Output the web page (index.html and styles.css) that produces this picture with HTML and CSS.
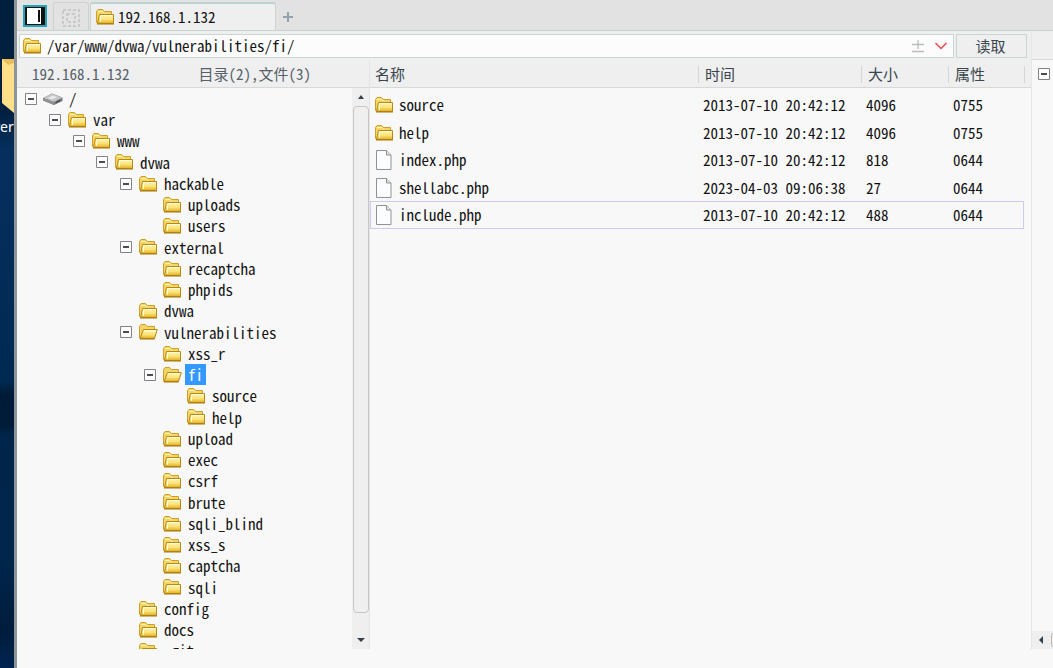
FILE: index.html
```html
<!DOCTYPE html>
<html lang="zh-CN">
<head>
<meta charset="utf-8">
<title>192.168.1.132</title>
<link rel="stylesheet" href="styles.css">
</head>
<body>
<svg class="sprite" aria-hidden="true">
  <defs>
    <linearGradient id="gold" x1="0" y1="0" x2="0" y2="1">
      <stop offset="0" stop-color="#fff6b8"/><stop offset="0.55" stop-color="#fbe277"/><stop offset="1" stop-color="#e0ae24"/>
    </linearGradient>
    <symbol id="folder" viewBox="0 0 20 18">
      <path d="M1.500 14.500V3.500L3 1.500H7.500L9.500 3.500H16.500V15Z" fill="#f3d566" stroke="#cf9f2b"/>
      <path d="M3 3.500H8L10 5.500" fill="none" stroke="#fff3b0"/>
      <path d="M4.500 6.500H18.500V15.500H2.500Z" fill="url(#gold)" stroke="#b98a12"/>
      <path d="M5.500 7.500H17.500M5.500 7.500V14" fill="none" stroke="#fffbd8"/>
      <path d="M2 16H19" stroke="#a87606"/>
    </symbol>
    <symbol id="folder-open" viewBox="0 0 20 18">
      <path d="M1.500 15V3.500L3 1.500H7.500L9.500 3.500H16.500V15Z" fill="#f3d566" stroke="#cf9f2b"/>
      <path d="M5.500 6.500H19.300L16.500 15.500H2Z" fill="url(#gold)" stroke="#b98a12"/>
      <path d="M6 7.800H18" stroke="#fffbd8"/>
      <path d="M2 16H16.500" stroke="#a87606"/>
    </symbol>
    <symbol id="file" viewBox="0 0 20 22">
      <path d="M2.500 1.500H12.500L17 6V20.500H2.500Z" fill="#fbfcfd" stroke="#8e9397"/>
      <path d="M12.500 1.500V6H17" fill="#dfe3e6" stroke="#8e9397"/>
    </symbol>
    <symbol id="drive" viewBox="0 0 20 18">
      <path d="M0 8L9 3.500L19.500 7.500V11L11 15L0 10.500Z" fill="#77797c"/>
      <path d="M0 8L9 3.500L19.500 7.500L11 12Z" fill="#c2c4c6"/>
      <path d="M5 8L10 5.500L14 7L9 9.500Z" fill="#e9eaeb"/>
      <path d="M0 10.500L11 15V12L0 8Z" fill="#8f9194"/>
      <path d="M13 13L17 11V10L13 12Z" fill="#33363a"/>
    </symbol>
    <symbol id="minus" viewBox="0 0 12 12">
      <path d="M.5.5H11.500V11.500H.5Z" fill="#fdfdfd" stroke="#808488"/>
      <path d="M3 6H9" stroke="#111" stroke-width="1.500"/>
    </symbol>
  </defs>
</svg>

<aside class="desktop">
  <svg class="desktop-icon" viewBox="0 0 14 54"><path d="M2 0H14V54L2 44Z" fill="#ffdf8a"/><path d="M2 0H14V4L8 6Z" fill="#e9bd58"/></svg>
  <span class="desktop-label">ver</span>
</aside>

<main class="window">
  <nav class="tabs">
    <button class="tab-panel" aria-label="面板">
      <svg viewBox="0 0 24 22"><path d="M1 1H23V21H1Z" fill="#111" stroke="#20a5b6" stroke-width="2"/><path d="M4 3H15V19H4Z" fill="#fff"/><path d="M15 3H18V19H15Z" fill="#fff"/><path d="M16 5V17" stroke="#111" stroke-width="2"/></svg>
    </button>
    <button class="tab tab-blank" aria-label="空白">
      <svg viewBox="0 0 18 18"><path d="M1 1H17V17H1ZM5 5H13V13H5Z" fill="none" stroke="#bfc1c2" stroke-width="1.500" stroke-dasharray="3 2"/></svg>
    </button>
    <button class="tab tab-active"><svg class="icon"><use href="#folder"/></svg>192.168.1.132</button>
    <button class="tab-add" aria-label="新建"><svg viewBox="0 0 12 12"><path d="M6 1V11M1 6H11" stroke="#93a4ae" stroke-width="2"/></svg></button>
  </nav>

  <div class="body">
    <div class="manager">
      <form class="toolbar">
        <label class="address">
          <svg class="icon"><use href="#folder"/></svg>
          <input type="text" value="/var/www/dvwa/vulnerabilities/fi/" aria-label="路径">
          <svg class="glyph" viewBox="0 0 14 14"><path d="M7 1V10M1 5.500H13M1 12.500H13" stroke="#b9bbbc" stroke-width="1.300" fill="none"/></svg>
          <svg class="glyph" viewBox="0 0 14 14"><path d="M1.500 4L7 9.500L12.500 4" stroke="#f0484a" stroke-width="1.500" fill="none"/></svg>
        </label>
        <button type="button" class="read">读取</button>
      </form>

      <div class="panes">
        <section class="tree-pane">
          <header class="tree-head"><span>192.168.1.132</span><span>目录(2),文件(3)</span></header>
          <div class="tree-body">
            <ul class="tree">
              <li class="l0"><button aria-label="收起"><svg><use href="#minus"/></svg></button><svg class="icon"><use href="#drive"/></svg><span>/</span></li>
              <li class="l1"><button aria-label="收起"><svg><use href="#minus"/></svg></button><svg class="icon"><use href="#folder"/></svg><span>var</span></li>
              <li class="l2"><button aria-label="收起"><svg><use href="#minus"/></svg></button><svg class="icon"><use href="#folder"/></svg><span>www</span></li>
              <li class="l3"><button aria-label="收起"><svg><use href="#minus"/></svg></button><svg class="icon"><use href="#folder"/></svg><span>dvwa</span></li>
              <li class="l4"><button aria-label="收起"><svg><use href="#minus"/></svg></button><svg class="icon"><use href="#folder"/></svg><span>hackable</span></li>
              <li class="l5 leaf"><svg class="icon"><use href="#folder"/></svg><span>uploads</span></li>
              <li class="l5 leaf"><svg class="icon"><use href="#folder"/></svg><span>users</span></li>
              <li class="l4"><button aria-label="收起"><svg><use href="#minus"/></svg></button><svg class="icon"><use href="#folder"/></svg><span>external</span></li>
              <li class="l5 leaf"><svg class="icon"><use href="#folder"/></svg><span>recaptcha</span></li>
              <li class="l5 leaf"><svg class="icon"><use href="#folder"/></svg><span>phpids</span></li>
              <li class="l4 leaf"><svg class="icon"><use href="#folder"/></svg><span>dvwa</span></li>
              <li class="l4"><button aria-label="收起"><svg><use href="#minus"/></svg></button><svg class="icon"><use href="#folder-open"/></svg><span>vulnerabilities</span></li>
              <li class="l5 leaf"><svg class="icon"><use href="#folder"/></svg><span>xss_r</span></li>
              <li class="l5"><button aria-label="收起"><svg><use href="#minus"/></svg></button><svg class="icon"><use href="#folder-open"/></svg><span class="selected">fi</span></li>
              <li class="l6 leaf"><svg class="icon"><use href="#folder"/></svg><span>source</span></li>
              <li class="l6 leaf"><svg class="icon"><use href="#folder"/></svg><span>help</span></li>
              <li class="l5 leaf"><svg class="icon"><use href="#folder"/></svg><span>upload</span></li>
              <li class="l5 leaf"><svg class="icon"><use href="#folder"/></svg><span>exec</span></li>
              <li class="l5 leaf"><svg class="icon"><use href="#folder"/></svg><span>csrf</span></li>
              <li class="l5 leaf"><svg class="icon"><use href="#folder"/></svg><span>brute</span></li>
              <li class="l5 leaf"><svg class="icon"><use href="#folder"/></svg><span>sqli_blind</span></li>
              <li class="l5 leaf"><svg class="icon"><use href="#folder"/></svg><span>xss_s</span></li>
              <li class="l5 leaf"><svg class="icon"><use href="#folder"/></svg><span>captcha</span></li>
              <li class="l5 leaf"><svg class="icon"><use href="#folder"/></svg><span>sqli</span></li>
              <li class="l4 leaf"><svg class="icon"><use href="#folder"/></svg><span>config</span></li>
              <li class="l4 leaf"><svg class="icon"><use href="#folder"/></svg><span>docs</span></li>
              <li class="l4 leaf"><svg class="icon"><use href="#folder"/></svg><span>.git</span></li>
            </ul>
            <div class="scrollbar">
              <svg class="arrow" viewBox="0 0 8 8"><path d="M1 6L4 2L7 6Z" fill="#35404a"/></svg>
              <div class="thumb"></div>
              <svg class="arrow" viewBox="0 0 8 8"><path d="M0 2H8L4 6Z" fill="#35404a"/></svg>
            </div>
          </div>
        </section>

        <section class="list-pane">
          <table class="files">
            <thead><tr><th class="name">名称</th><th class="time">时间</th><th class="size">大小</th><th class="attr">属性</th><th class="end"></th></tr></thead>
            <tbody>
              <tr><td><div class="entry"><svg class="icon"><use href="#folder"/></svg>source</div></td><td>2013-07-10 20:42:12</td><td>4096</td><td>0755</td></tr>
              <tr><td><div class="entry"><svg class="icon"><use href="#folder"/></svg>help</div></td><td>2013-07-10 20:42:12</td><td>4096</td><td>0755</td></tr>
              <tr><td><div class="entry"><svg class="icon doc"><use href="#file"/></svg>index.php</div></td><td>2013-07-10 20:42:12</td><td>818</td><td>0644</td></tr>
              <tr><td><div class="entry"><svg class="icon doc"><use href="#file"/></svg>shellabc.php</div></td><td>2023-04-03 09:06:38</td><td>27</td><td>0644</td></tr>
              <tr class="focused"><td><div class="entry"><svg class="icon doc"><use href="#file"/></svg>include.php</div></td><td>2013-07-10 20:42:12</td><td>488</td><td>0644</td></tr>
            </tbody>
          </table>
        </section>
      </div>
    </div>

    <aside class="side">
      <div class="side-head"></div>
      <div class="side-body"><button aria-label="收起"><svg><use href="#minus"/></svg></button></div>
      <div class="side-scroll">
        <svg class="arrow" viewBox="0 0 8 8"><path d="M6 0V8L2 4Z" fill="#35404a"/></svg>
        <div class="side-thumb"></div>
      </div>
    </aside>
  </div>
</main>
</body>
</html>
```
FILE: styles.css
```css
* { box-sizing: border-box; }

body {
  margin: 0;
  height: 100vh;
  display: flex;
  overflow: hidden;
  background: #f8f8f8;
  color: #111;
  font: 15px/20px "Noto Sans CJK SC", "Liberation Mono", monospace;
  font-feature-settings: "hwid", "liga" 0;
}

button, input {
  font: inherit;
  font-feature-settings: inherit;
  color: inherit;
  margin: 0;
  padding: 0;
  border: 0;
  background: none;
}

svg { display: block; flex: none; }
.sprite { position: absolute; width: 0; height: 0; }
.icon { width: 20px; height: 18px; }
.icon.doc { height: 22px; }
.arrow { width: 8px; height: 8px; }

.desktop {
  width: 14px;
  flex: none;
  overflow: hidden;
  padding-top: 59px;
  background: linear-gradient(#001f3d 0, #002040 110px, #062f5e 150px, #002a52 380px, #001b36 395px, #001c38 425px, #00254a 435px, #00264c 560px, #001c3c 630px, #002450 100%);
}
.desktop-icon { width: 14px; height: 54px; }
.desktop-label {
  display: block;
  margin: 4px 0 0 -7px;
  color: #fff;
  font: 14px/20px "Noto Sans", sans-serif;
}

.window {
  flex: 1;
  min-width: 0;
  display: flex;
  flex-direction: column;
  border-left: 3px solid #8e9599;
}

.tabs {
  flex: none;
  height: 31px;
  display: flex;
  align-items: flex-start;
  background: #e2e2e2;
  border-bottom: 1px solid #c9d3d2;
}
.tab-panel { padding: 5px 6px 0; }
.tab-panel svg { width: 24px; height: 22px; }
.tab {
  height: 28px;
  border: 1px solid #ccd2d1;
  border-bottom: 0;
  border-radius: 3px 3px 0 0;
  margin-top: 2px;
}
.tab-blank { width: 36px; padding: 2px 8px 0; }
.tab-blank svg { width: 18px; height: 18px; }
.tab-active {
  display: flex;
  align-items: center;
  gap: 3px;
  width: 186px;
  margin-left: 1px;
  padding-left: 4px;
  border-top: 2px solid #bdd3d0;
  background: #efefef;
}
.tab-add { padding: 11px 6px 0; }
.tab-add svg { width: 12px; height: 12px; }

.body { flex: 1; min-height: 0; display: flex; padding-bottom: 19px; }
.manager { flex: 1; min-width: 0; display: flex; flex-direction: column; }

.toolbar {
  flex: none;
  display: flex;
  gap: 2px;
  padding: 3px 4px 2px 2px;
  background: #efefef;
}
.address {
  flex: 1;
  display: flex;
  align-items: center;
  height: 24px;
  padding: 0 5px 1px 2px;
  border: 1px solid #c9d6d4;
  background: #fcfcfc;
}
.address input { flex: 1; min-width: 0; height: 20px; margin-left: 5px; outline: 0; }
.glyph { width: 14px; height: 14px; margin-left: 9px; }
.read {
  width: 71px;
  height: 24px;
  padding-right: 2px;
  border: 1px solid #c9d6d4;
  background: #efefef;
  color: #38444e;
}

.panes { flex: 1; min-height: 0; display: flex; }
.tree-pane { width: 352px; flex: none; display: flex; flex-direction: column; }
.tree-head {
  flex: none;
  height: 28px;
  display: flex;
  gap: 69px;
  align-items: center;
  padding-left: 15px;
  background: #efefef;
  border-bottom: 1px solid #d8d8d8;
  color: #56616a;
}
.tree-body { flex: 1; min-height: 0; display: flex; }

.tree {
  flex: 1;
  overflow: hidden;
  list-style: none;
  margin: 0;
  padding: 0 0 0 8px;
}
.tree li { display: flex; align-items: center; height: 21px; }
.tree li:nth-child(4n) { height: 22px; }
.tree button { margin-right: 6px; }
.tree button svg, .side button svg { width: 12px; height: 12px; }
.tree span { margin-left: 3px; padding: 0 3px; line-height: 21px; }
.tree .selected { background: #3399ff; color: #fff; }
.tree .leaf::before { content: ""; width: 18px; }
.l1 { padding-left: 24px; }
.l2 { padding-left: 48px; }
.l3 { padding-left: 71px; }
.l4 { padding-left: 95px; }
.l5 { padding-left: 119px; }
.l6 { padding-left: 143px; }

.scrollbar {
  width: 17px;
  display: flex;
  flex-direction: column;
  align-items: center;
  justify-content: space-between;
  gap: 5px;
  padding: 5px 0;
  background: #efefef;
}
.thumb {
  flex: 1;
  width: 16px;
  margin-bottom: 18px;
  border: 1px solid #c6c6c6;
  border-radius: 4px;
  background: #efefef;
}

.list-pane { flex: 1; min-width: 0; border-left: 1px solid #e4e4e4; }
.files { width: 100%; table-layout: fixed; border-collapse: separate; border-spacing: 0; }
.files th {
  height: 28px;
  padding: 0 0 0 7px;
  text-align: left;
  font-weight: normal;
  color: #38444e;
  border-bottom: 1px solid #d8d8d8;
  background: #efefef linear-gradient(#d6d6d6, #d6d6d6) no-repeat 0 6px / 1px 17px;
}
.files .name { padding-left: 5px; background-image: none; }
.files .time { width: 163px; }
.files .size { width: 87px; }
.files .attr { width: 76px; }
.files .end { width: 7px; padding: 0; }
.files td { height: 28px; padding: 0 0 0 5px; }
.files tbody tr:nth-child(2n) td { height: 27px; }
.files td:first-child { padding-left: 4px; }
.files tbody tr:first-child td { height: 31px; padding-top: 3px; }
.entry { display: flex; align-items: center; gap: 5px; }
.focused td { border: solid #cbcbf4; border-width: 1px 0; }
.files .focused td:first-child { border-left-width: 1px; padding-left: 3px; }
.focused td:last-child { border-right-width: 1px; }

.side {
  width: 22px;
  flex: none;
  display: flex;
  flex-direction: column;
  border-left: 1px solid #e6e6e6;
}
.side-head { height: 29px; background: #efefef; border-bottom: 1px solid #dadada; }
.side-body { flex: 1; padding: 8px 6px; }
.side-body button { display: block; }
.side-scroll {
  height: 18px;
  display: flex;
  align-items: center;
  gap: 6px;
  padding-left: 5px;
  overflow: hidden;
  background: #efefef;
}
.side-thumb {
  width: 16px;
  height: 16px;
  flex: none;
  border: 1px solid #b8b8b8;
  border-radius: 4px;
}
```
